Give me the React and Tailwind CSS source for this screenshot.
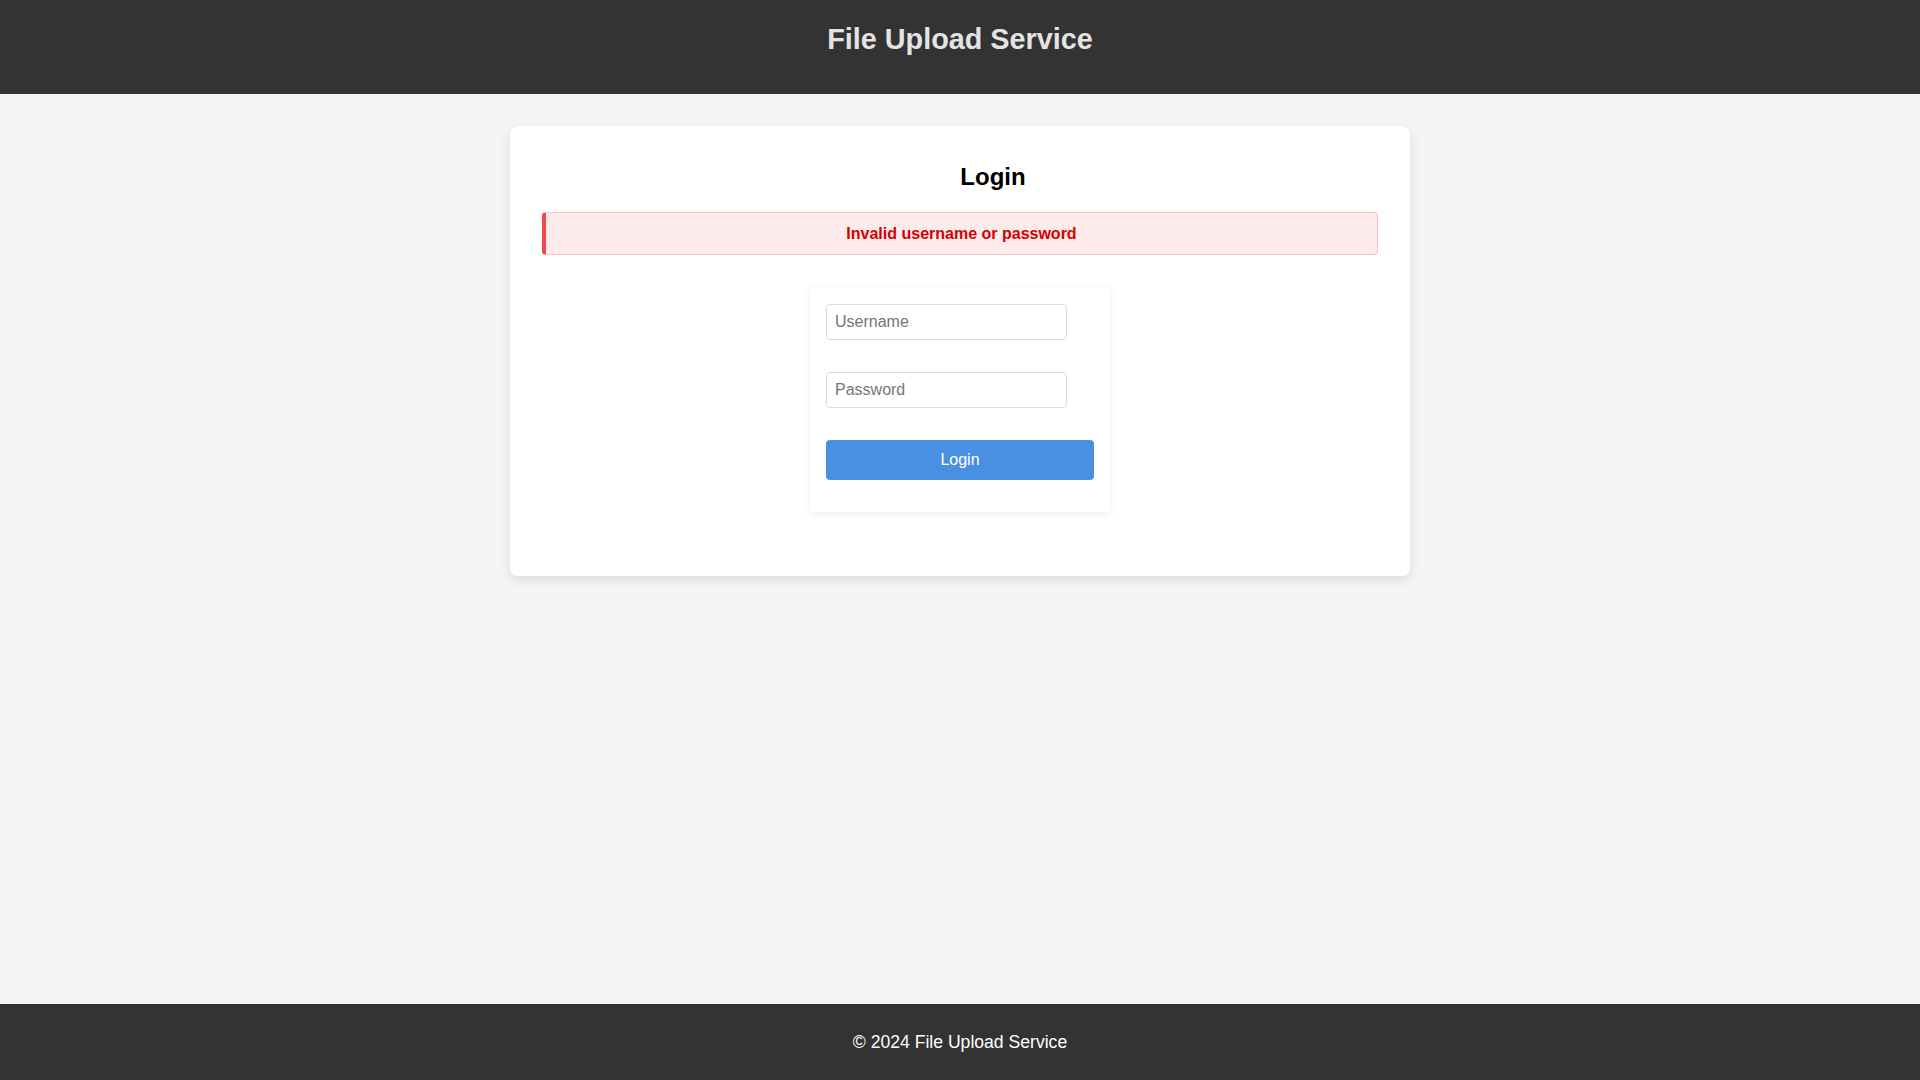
import React from 'react'

export default function App() {
  return (
    <div className="min-h-screen flex flex-col bg-[#f4f5f7] font-['Liberation_Sans',Arial,sans-serif]">
      {/* Header */}
      <header className="h-[94px] bg-[#333333] pt-[23px] text-center">
        <h1 className="text-[28.8px] leading-[33px] font-bold text-[#e3e3e3]">File Upload Service</h1>
      </header>

      {/* Main */}
      <main className="flex-1 pt-8">
        <div className="mx-auto w-[900px] bg-white rounded-lg shadow-[0_4px_12px_rgba(0,0,0,0.1)] p-8">
          <h2 className="pl-[66px] text-center text-2xl leading-[38px] font-bold text-black mb-[16px]">Login</h2>

          <div className="py-[10px] leading-[21px] text-center font-bold text-[#d40000] bg-[#fdeaea] border border-[#f8c3c6] border-l-4 border-l-[#f04848] rounded">
            Invalid username or password
          </div>

          <form
            className="mt-[33px] mb-8 mx-auto w-[300px] bg-white px-4 pt-4 pb-8 shadow-[0_2px_8px_rgba(0,0,0,0.08)]"
            onSubmit={(e) => e.preventDefault()}
          >
            <input
              type="text"
              placeholder="Username"
              className="block w-[241px] h-[36px] px-2 text-base text-[#333] placeholder:text-[#757575] border border-[#dcdcdc] rounded outline-none"
            />
            <input
              type="password"
              placeholder="Password"
              className="block mt-8 w-[241px] h-[36px] px-2 text-base text-[#333] placeholder:text-[#757575] border border-[#dcdcdc] rounded outline-none"
            />
            <button
              type="submit"
              className="block mt-8 w-full h-[40px] bg-[#4a90e2] text-white text-base rounded"
            >
              Login
            </button>
          </form>
        </div>
      </main>

      {/* Footer */}
      <footer className="h-[76px] bg-[#333333] flex items-center justify-center text-white text-[17.6px]">
        © 2024 File Upload Service
      </footer>
    </div>
  )
}
